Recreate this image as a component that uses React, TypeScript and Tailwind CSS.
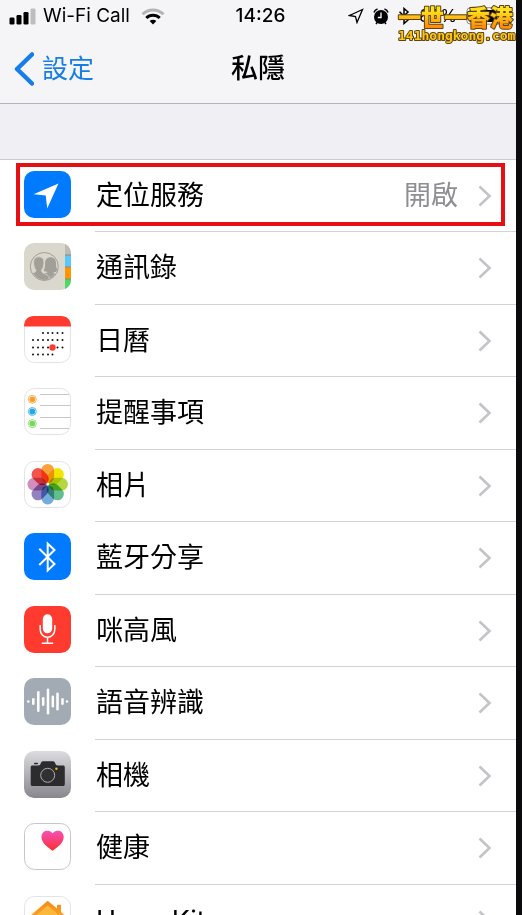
import React from 'react';

interface PrivacyItem {
  label: string;
  icon: React.ReactNode;
  value?: string;
  highlighted?: boolean;
}

const LocationIcon = () => (
  <>
    <rect width="47" height="47" rx="10" fill="#007aff" />
    <path d="M34.5 12.5 9.5 23.3 21.7 24.5 23.2 37.5Z" fill="#fff" />
  </>
);

const ContactsIcon = () => (
  <>
    <clipPath id="contacts-shape">
      <rect width="47" height="47" rx="10" />
    </clipPath>
    <g clipPath="url(#contacts-shape)">
      <rect width="47" height="47" fill="#dad7cd" />
      <rect x="41" width="6" height="12" fill="#bfbcb3" />
      <rect x="41" y="12" width="6" height="12" fill="#5ac8fa" />
      <rect x="41" y="24" width="6" height="12" fill="#ff9500" />
      <rect x="41" y="36" width="6" height="11" fill="#4cd964" />
      <path d="M41 12h6M41 24h6M41 36h6" stroke="#8f8a7d" strokeWidth="1" />
    </g>
    <clipPath id="contacts-circle">
      <circle cx="20.3" cy="23.5" r="13.2" />
    </clipPath>
    <circle cx="20.3" cy="23.5" r="14" fill="none" stroke="#a29f98" strokeWidth="1" />
    <g clipPath="url(#contacts-circle)" fill="#a29f98">
      <path d="M26.5 14.200c3.500 0 5.500 2.300 5.500 6 0 3.500.6 5.500 1.800 7.600-1.300 1.200-3 1.400-4.500 1.500 0 1.500 3 2 6.700 3.700V40H18l2-9.500c2.500-.8 3.800-1 3.800-1.500-1.500 0-3-.4-4.200-1.400 1.200-2.100 1.500-4.100 1.500-7.400 0-3.700 2-6 5.400-6Z" />
      <path d="M14.800 13.800c3.700 0 5.400 2.600 5.100 6.500-.2 3-1.100 5.200-2.400 7-.2 3.500 5.500 3.500 7.500 6.200L25 40H3l2-8.500c2.500-1.500 7-1.500 7-4.200-1.400-1.800-2.100-4-2.300-7-.3-3.900 1.400-6.500 5.100-6.500Z" stroke="#dad7cd" strokeWidth=".8" />
    </g>
  </>
);

const calendarColumns = [9, 14, 19, 24, 28.5, 33.5, 38.5];
const calendarRows = [
  { y: 17, from: 2, to: 6 },
  { y: 24, from: 0, to: 6 },
  { y: 31.5, from: 0, to: 6 },
  { y: 38.5, from: 0, to: 4 },
];

const CalendarIcon = () => (
  <>
    <rect x=".5" y=".5" width="46" height="46" rx="10" fill="#fff" stroke="#e3e3e5" />
    <path d="M0 10.500C0 4 4 0 10 0h27c6 0 10 4 10 10.500Z" fill="#ff3b30" />
    {calendarRows.map(row =>
      calendarColumns
        .slice(row.from, row.to + 1)
        .map(x => <circle key={`${x}-${row.y}`} cx={x} cy={row.y} r="1" fill="#111" />)
    )}
    <circle cx="28.5" cy="31.5" r="3.2" fill="#ff3b30" />
  </>
);

const RemindersIcon = () => (
  <>
    <rect x=".5" y=".5" width="46" height="46" rx="10" fill="#fff" stroke="#e3e3e5" />
    <path d="M16 6.500h29M16 17.500h31M16 29.500h31M16 40.500h29" stroke="#c8c8cc" />
    {[
      { y: 11.3, color: '#f7a02e' },
      { y: 23.5, color: '#28a8e0' },
      { y: 35.6, color: '#76d95c' },
    ].map(dot => (
      <g key={dot.y}>
        <circle cx="8.3" cy={dot.y} r="4" fill="#fff" stroke={dot.color} strokeWidth=".8" />
        <circle cx="8.3" cy={dot.y} r="2.9" fill={dot.color} />
      </g>
    ))}
  </>
);

const petals = ['#f9a13a', '#f2e500', '#b4d840', '#64bd8c', '#74acde', '#9481c0', '#d08fbc', '#f5544a'];

const PhotosIcon = () => (
  <>
    <rect x=".5" y=".5" width="46" height="46" rx="10" fill="#fff" stroke="#e3e3e5" />
    <g className="isolate">
      {petals.map((color, i) => (
        <rect
          key={color}
          x="17.3"
          y="3"
          width="12.8"
          height="19"
          rx="6.4"
          fill={color}
          transform={`rotate(${i * 45} 23.7 23.2)`}
          className="mix-blend-multiply"
        />
      ))}
    </g>
  </>
);

const BluetoothIcon = () => (
  <>
    <rect width="47" height="47" rx="10" fill="#007aff" />
    <path d="M15.300 15.800 30.500 31 23.700 37.500V10.500L30.500 17 15.300 32" fill="none" stroke="#fff" strokeWidth="2" />
  </>
);

const MicrophoneIcon = () => (
  <>
    <rect width="47" height="47" rx="10" fill="#ff3b30" />
    <rect x="18.8" y="8.3" width="9.4" height="19" rx="4.7" fill="#fff" />
    <path d="M16.200 19v4.500a7.300 7.800 0 0 0 14.600 0V19M23.500 31.500v5.500M17.800 37.200h11.400" fill="none" stroke="#fff" strokeWidth="1.5" />
  </>
);

const speechBars = [
  [4.3, 2.5], [9.3, 7], [14.3, 21], [19.2, 9], [24, 26], [28.8, 12], [33.5, 18], [38.5, 7], [43, 2.5],
];

const SpeechIcon = () => (
  <>
    <rect width="47" height="47" rx="10" fill="#a2aab4" />
    {speechBars.map(([x, height]) => (
      <rect key={x} x={x - 1.25} y={23.5 - height / 2} width="2.5" height={height} rx="1.25" fill="#fff" />
    ))}
  </>
);

const CameraIcon = () => (
  <>
    <linearGradient id="camera-bg" x2="0" y2="1">
      <stop stopColor="#dcdbe0" />
      <stop offset="1" stopColor="#88878d" />
    </linearGradient>
    <rect width="47" height="47" rx="10" fill="url(#camera-bg)" />
    <path d="M10 13.300V12.500c0-.5.3-.8.8-.8h2.400c.5 0 .8.300.8.800v.8Z" fill="#2c2c2e" />
    <path d="M8.700 14.500h5.500c1.500 0 2-.6 2.600-2.200.6-1.500 1.200-2 2.700-2h9c1.500 0 2.100.5 2.700 2 .6 1.600 1.100 2.200 2.600 2.200h5c1.400 0 2 .6 2 2v16.500c0 1.400-.6 2-2 2H8.700c-1.400 0-2-.6-2-2V16.500c0-1.400.6-2 2-2Z" fill="#2c2c2e" />
    <circle cx="23.7" cy="24.3" r="7" fill="#303033" stroke="#b9b9bb" strokeWidth=".9" />
    <circle cx="32.4" cy="17.7" r="1.2" fill="#e8c21c" />
  </>
);

const HealthIcon = () => (
  <>
    <linearGradient id="health-heart" x2="0" y2="1">
      <stop stopColor="#f651b8" />
      <stop offset="1" stopColor="#fc2d2f" />
    </linearGradient>
    <rect x=".5" y=".5" width="46" height="46" rx="10" fill="#fff" stroke="#c6c6c8" />
    <path d="M28.600 10.300C26.800 8.300 25 7.800 23.200 7.800c-3.400 0-5.700 2.700-5.700 6.200 0 6 6.500 10.500 11.100 13.800 4.600-3.300 11.100-7.800 11.100-13.800 0-3.500-2.300-6.200-5.700-6.200-1.800 0-3.600.5-5.400 2.500Z" fill="url(#health-heart)" />
  </>
);

const HomeKitIcon = () => (
  <>
    <linearGradient id="home-roof" x2="0" y2="1">
      <stop stopColor="#f78b18" />
      <stop offset="1" stopColor="#fdb92c" />
    </linearGradient>
    <rect x=".5" y=".5" width="46" height="46" rx="10" fill="#fff" stroke="#e3e3e5" />
    <path d="M23.700 4.800 33 12.500V9.500c0-.5.3-.8.8-.8h2.400c.5 0 .8.300.8.800v6.500l4.500 4-2.500 1.500V39H8.500V21.500L6 20Z" fill="url(#home-roof)" />
    <path d="M23.700 9.500 12 19.500V35h23.500V19.500Z" fill="#fdb83c" />
  </>
);

const items: PrivacyItem[] = [
  { label: '定位服務', icon: <LocationIcon />, value: '開啟', highlighted: true },
  { label: '通訊錄', icon: <ContactsIcon /> },
  { label: '日曆', icon: <CalendarIcon /> },
  { label: '提醒事項', icon: <RemindersIcon /> },
  { label: '相片', icon: <PhotosIcon /> },
  { label: '藍牙分享', icon: <BluetoothIcon /> },
  { label: '咪高風', icon: <MicrophoneIcon /> },
  { label: '語音辨識', icon: <SpeechIcon /> },
  { label: '相機', icon: <CameraIcon /> },
  { label: '健康', icon: <HealthIcon /> },
  { label: 'HomeKit', icon: <HomeKitIcon /> },
];

const StatusBar: React.FC = () => (
  <div className="relative grid h-8 grid-cols-[1fr_auto_1fr] items-center pl-[9px] pr-1 text-[19px] leading-8">
    <div className="flex items-center gap-[7px]">
      <svg width="27" height="17" viewBox="0 0 27 17" aria-hidden="true">
        <rect x=".5" y="9.5" width="5" height="7" rx="1.3" />
        <rect x="7.5" y="7" width="5" height="9.5" rx="1.3" />
        <rect x="14.5" y="4" width="5" height="12.5" rx="1.3" />
        <rect x="21.5" y=".5" width="5" height="16" rx="1.3" fill="#bdbdbf" />
      </svg>
      <span className="whitespace-nowrap">Wi-Fi Call</span>
      <svg width="24" height="17" viewBox="0 0 24 17" className="ml-1" fill="none" strokeWidth="3" aria-hidden="true">
        <path d="M1.500 6.300a15 15 0 0 1 21 0" stroke="#b4b4b6" />
        <path d="M5.300 10a9.600 9.600 0 0 1 13.400 0" stroke="#000" />
        <path d="M12 16.500 8.700 13a4.700 4.700 0 0 1 6.600 0Z" fill="#000" />
      </svg>
    </div>
    <span className="font-medium">14:26</span>
    <div className="flex items-center justify-end gap-[9px] pr-[3px]">
      <svg width="16" height="16" viewBox="0 0 16 16" aria-hidden="true">
        <path d="M14.500 1.500 1.500 7.500 7.500 8.500 9 14.500Z" fill="none" stroke="#000" strokeWidth="1.3" />
      </svg>
      <svg width="16" height="17" viewBox="0 0 16 17" aria-hidden="true">
        <circle cx="8" cy="9" r="7" />
        <path d="M1 4.500A5 5 0 0 1 4.500 1M15 4.500A5 5 0 0 0 11.500 1M3 16l1.500-2M13 16l-1.500-2" fill="none" stroke="#000" strokeWidth="1.5" />
        <path d="M8 4.500V9.500H4.800" fill="none" stroke="#fff" strokeWidth="1.3" />
      </svg>
      <svg width="12" height="18" viewBox="0 0 12 18" aria-hidden="true">
        <path d="M1.500 4.800 10 13 6 16.500V1.500L10 5 1.500 13" fill="none" stroke="#000" strokeWidth="1.5" />
      </svg>
      <span className="text-[17px]">86%</span>
      <svg width="43" height="18" viewBox="0 0 43 18" aria-hidden="true">
        <rect x=".7" y=".7" width="37" height="16.5" rx="4" fill="none" stroke="#8c8c90" />
        <rect x="3" y="3" width="28" height="12" rx="2" />
        <path d="M40 6v6c1.500-.5 2.500-1.500 2.500-3S41.500 6.500 40 6Z" fill="#8c8c90" />
      </svg>
    </div>
    <svg className="absolute right-0 top-[5px]" width="120" height="42" viewBox="0 0 120 42">
      <linearGradient id="mark-fill" x2="0" y2="1">
        <stop offset=".25" stopColor="#ffe01c" />
        <stop offset=".8" stopColor="#ff8d08" />
      </linearGradient>
      <g stroke="#5e4310" strokeLinejoin="round" className="[paint-order:stroke]">
        <text x="2" y="21" fontSize="23" fontWeight="900" fill="url(#mark-fill)" strokeWidth="2">一世一香港</text>
        <text x="2" y="35" fontSize="13" fontWeight="700" fill="#ffc814" strokeWidth="2" className="font-['DejaVu_Sans_Mono',monospace]">141hongkong.com</text>
      </g>
    </svg>
  </div>
);

const NavBar: React.FC = () => (
  <nav className="grid h-[71px] grid-cols-[1fr_auto_1fr] items-center px-[14px] pt-[2px]">
    <button type="button" className="flex items-center gap-2 text-[26px] leading-9 text-[#177de8]">
      <svg width="20" height="34" viewBox="0 0 20 34" aria-hidden="true">
        <path d="M18 2.500 3 17 18 31.500" fill="none" stroke="currentColor" strokeWidth="4.5" strokeLinecap="round" strokeLinejoin="round" />
      </svg>
      設定
    </button>
    <h1 className="text-[27px] font-medium leading-9">私隱</h1>
  </nav>
);

const PrivacyRow: React.FC<{ item: PrivacyItem }> = ({ item }) => (
  <li className="relative odd:h-[72px] even:h-[73px]">
    <button type="button" className="flex h-full w-full items-stretch pl-6 text-left">
      <svg width="47" height="47" viewBox="0 0 47 47" className="mr-6 mt-[11px] shrink-0" aria-hidden="true">
        {item.icon}
      </svg>
      <span className="flex flex-1 items-center border-b border-[#d3d2d6] pr-6">
        <span className="flex-1 pl-px text-[27px] leading-10">{item.label}</span>
        {item.value && <span className="mr-5 text-[27px] leading-10 text-[#8e8e93]">{item.value}</span>}
        <svg width="14" height="22" viewBox="0 0 14 22" aria-hidden="true">
          <path d="M1.500 1.500 11.500 11 1.500 20.500" fill="none" stroke="#c4c4c8" strokeWidth="2.6" />
        </svg>
      </span>
    </button>
    {item.highlighted && (
      <div className="pointer-events-none absolute bottom-[6px] left-4 right-[11px] top-[3px] border-4 border-[#e60f14]" />
    )}
  </li>
);

export default function App() {
  return (
    <div className="h-screen overflow-hidden border-r-[6px] border-[#0b0b0d] bg-white font-['Inter','Noto_Sans_CJK_TC',sans-serif] text-black">
      <header className="border-b border-[#b5b4ba] bg-[#f5f5f7]">
        <StatusBar />
        <NavBar />
      </header>
      <main>
        <div className="h-14 border-b border-[#cbcad0] bg-[#efeff4]" />
        <ul>
          {items.map(item => (
            <PrivacyRow key={item.label} item={item} />
          ))}
        </ul>
      </main>
    </div>
  );
}
